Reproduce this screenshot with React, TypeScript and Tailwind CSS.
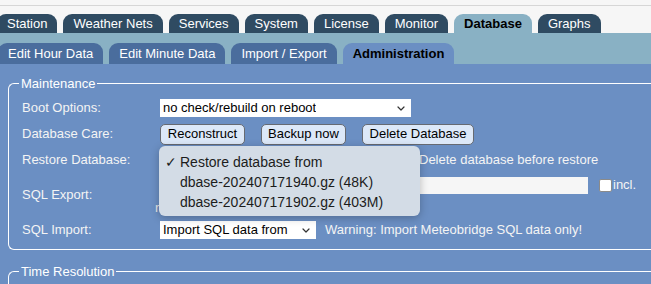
const mainTabs = ['Station', 'Weather Nets', 'Services', 'System', 'License', 'Monitor', 'Database', 'Graphs']
const subTabs = ['Edit Hour Data', 'Edit Minute Data', 'Import / Export', 'Administration']

function Chevron() {
  return (
    <svg width="8" height="5" viewBox="0 0 8 5" className="shrink-0">
      <path d="M1 1l3 3 3-3" fill="none" stroke="#333" strokeWidth="1.2" strokeLinecap="round" strokeLinejoin="round" />
    </svg>
  )
}

function FakeSelect({ text, width }: { text: string; width: string }) {
  return (
    <div className={`${width} flex h-[18px] items-center justify-between bg-white pl-[3px] pr-[6px] text-black`}>
      <span className="truncate">{text}</span>
      <Chevron />
    </div>
  )
}

function Btn({ label, width }: { label: string; width: string }) {
  return (
    <div
      className={`${width} flex h-[21px] items-center justify-center rounded-[5px] border-[1.5px] border-[#666a72] bg-[#dce8f8] text-black`}
    >
      {label}
    </div>
  )
}

function Row({ label, h, children }: { label: string; h: string; children: React.ReactNode }) {
  return (
    <div className={`grid grid-cols-[138px_1fr] items-center ${h}`}>
      <span className="text-[#f4f4f4]">{label}</span>
      <div>{children}</div>
    </div>
  )
}

// fieldset look-alike: legend sits in the top border line
function Group({ title, children, body }: { title: string; children?: React.ReactNode; body: string }) {
  return (
    <div className="w-[700px]">
      <div className="flex h-[15px] items-center">
        <div className="h-[8px] w-[11px] self-end rounded-tl-[6px] border-l border-t border-white" />
        <span className="px-[2px] leading-[15px] text-white">{title}</span>
        <div className="flex-1 border-t border-white" />
      </div>
      <div className={`rounded-bl-[6px] border-b border-l border-white pl-[13px] ${body}`}>{children}</div>
    </div>
  )
}

export default function App() {
  return (
    <div className="relative h-[284px] w-[651px] overflow-hidden bg-[#6b8fc3] font-['Liberation_Sans',Arial,sans-serif] text-[13px]">
      {/* top strip */}
      <div className="h-[14px] bg-[#f6f6f6] pt-[5px]">
        <div className="border-t border-[#d6d6d6]" />
      </div>

      {/* main tabs */}
      <div className="flex h-[19px] items-end bg-[#f6f6f6]">
        <div className="-ml-[3px] flex gap-[6px]">
          {mainTabs.map((t) => (
            <div
              key={t}
              className={
                t === 'Database'
                  ? 'h-[19px] rounded-t-[9px] bg-[#89b1c4] px-[10px] font-bold leading-[20px] whitespace-nowrap text-black'
                  : 'h-[19px] rounded-t-[9px] bg-[#2f4b62] px-[10px] leading-[20px] whitespace-nowrap text-white'
              }
            >
              {t}
            </div>
          ))}
        </div>
      </div>

      {/* sub tabs */}
      <div className="h-[31px] bg-[#89b1c4] pt-[10px]">
        <div className="-ml-[2px] flex gap-[6px]">
          {subTabs.map((t) => (
            <div
              key={t}
              className={
                t === 'Administration'
                  ? 'h-[21px] rounded-t-[9px] bg-[#6b8fc3] px-[10px] font-bold leading-[22px] whitespace-nowrap text-black'
                  : 'h-[21px] rounded-t-[9px] bg-[#4a6d9d] px-[10px] leading-[22px] whitespace-nowrap text-white'
              }
            >
              {t}
            </div>
          ))}
        </div>
      </div>

      {/* content */}
      <div className="px-[8px] pt-[12px]">
        <Group title="Maintenance" body="pt-[4px] pb-[6px]">
          <Row label="Boot Options:" h="h-[26px]">
            <FakeSelect text="no check/rebuild on reboot" width="w-[251px]" />
          </Row>
          <Row label="Database Care:" h="h-[26px]">
            <div className="flex gap-[16px]">
              <Btn label="Reconstruct" width="w-[85px]" />
              <Btn label="Backup now" width="w-[85px]" />
              <Btn label="Delete Database" width="w-[112px]" />
            </div>
          </Row>
          <Row label="Restore Database:" h="h-[26px]">
            <div className="flex items-center">
              <FakeSelect text="Restore database from" width="w-[240px]" />
              <span className="ml-[4px] h-[13px] w-[13px] rounded-[2px] border border-[#888] bg-white" />
              <span className="ml-[2px] text-[#f4f4f4]">Delete database before restore</span>
            </div>
          </Row>
          <Row label="SQL Export:" h="h-[44px]">
            <div className="flex flex-col">
              <div className="flex items-center">
                <div className="h-[17px] w-[428px] bg-[#f6f6f6]" />
                <span className="ml-[11px] h-[13px] w-[13px] rounded-[2px] border-[1.5px] border-[#8a8a8a] bg-white" />
                <span className="ml-[1px] text-[#f4f4f4]">incl.</span>
              </div>
              <span className="-ml-[5px] mt-[5px] leading-[15px] text-[#e8e8e8]">run export</span>
            </div>
          </Row>
          <Row label="SQL Import:" h="h-[26px]">
            <div className="flex items-center">
              <FakeSelect text="Import SQL data from" width="w-[156px]" />
              <span className="ml-[9px] text-[#f4f4f4]">Warning: Import Meteobridge SQL data only!</span>
            </div>
          </Row>
        </Group>

        <div className="mt-[14px]">
          <Group title="Time Resolution" body="h-[40px]" />
        </div>
      </div>

      {/* open restore menu */}
      <div className="absolute left-[159px] top-[146px] h-[70px] w-[261px] rounded-[6px] bg-[#d3dce6] pt-[6px] pl-[6px] text-[14px] text-[#1c1c1c] shadow-[0_2px_8px_rgba(0,0,0,0.25)]">
        <div className="flex h-[20px] items-center">
          <span className="w-[15px]">✓</span>
          <span>Restore database from</span>
        </div>
        <div className="flex h-[20px] items-center pl-[15px]">dbase-202407171940.gz (48K)</div>
        <div className="flex h-[20px] items-center pl-[15px]">dbase-202407171902.gz (403M)</div>
      </div>
    </div>
  )
}
